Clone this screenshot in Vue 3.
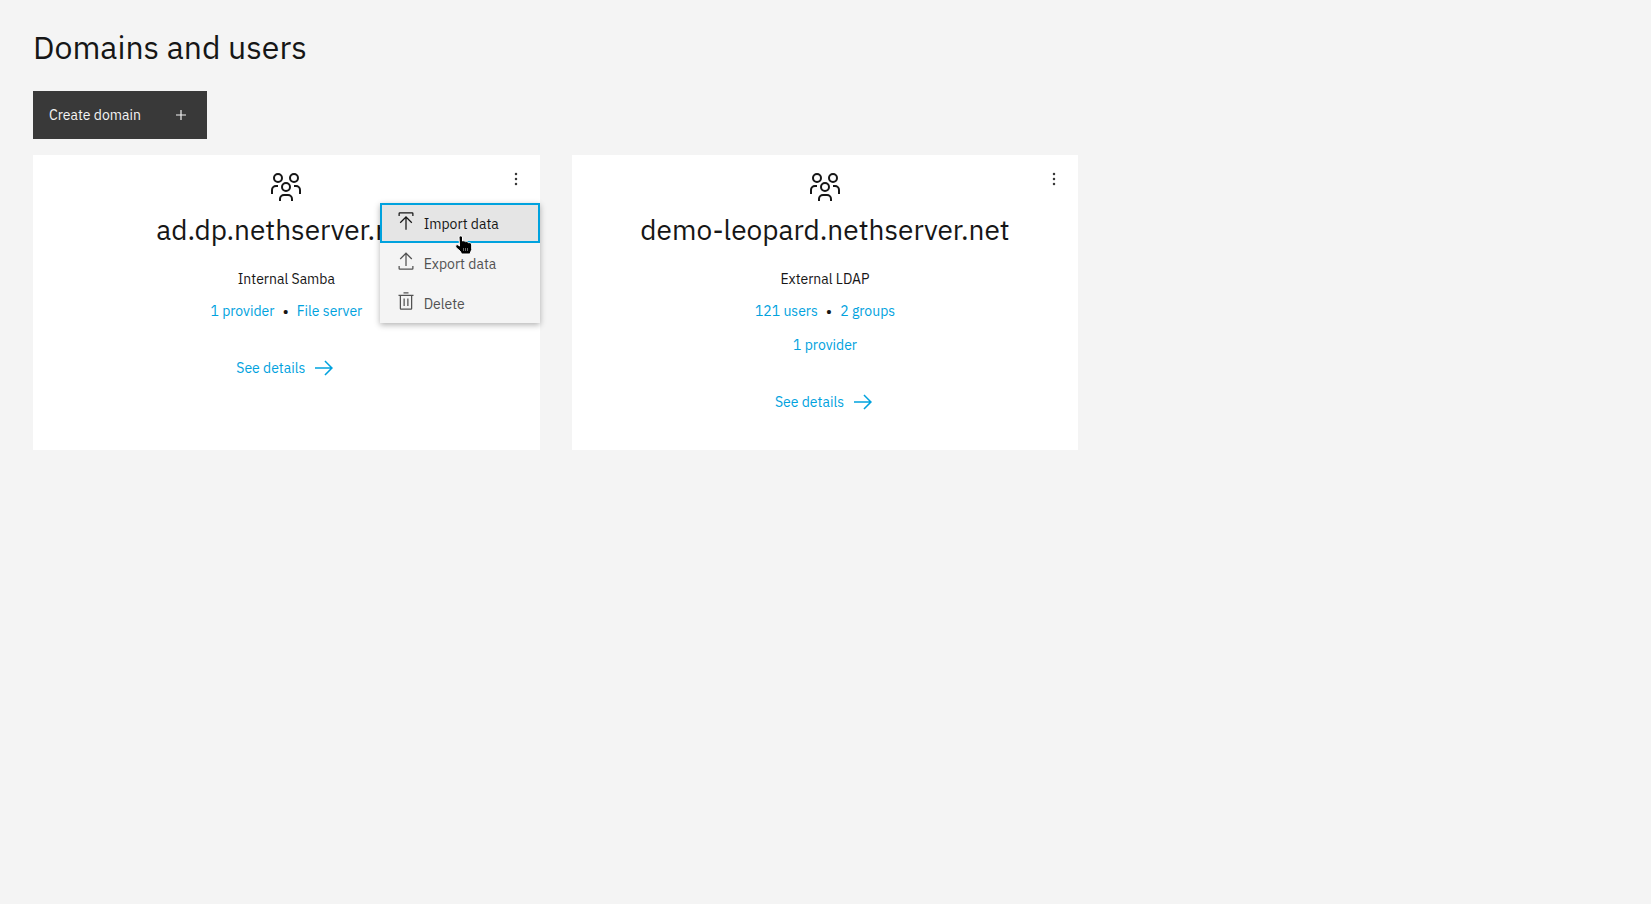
<script setup>
import { ref } from 'vue'

const domains = ref([
  {
    name: 'ad.dp.nethserver.net',
    type: 'Internal Samba',
    rows: [['1 provider', 'File server']],
    menuOpen: true
  },
  {
    name: 'demo-leopard.nethserver.net',
    type: 'External LDAP',
    rows: [['121 users', '2 groups'], ['1 provider']],
    menuOpen: false
  }
])

const menuItems = [
  { id: 'import', label: 'Import data' },
  { id: 'export', label: 'Export data' },
  { id: 'delete', label: 'Delete' }
]

const toggleMenu = (domain) => {
  domain.menuOpen = !domain.menuOpen
}
</script>

<template>
  <main class="page">
    <h1 class="page-title">Domains and users</h1>

    <button type="button" class="create-button">
      <span>Create domain</span>
      <svg width="16" height="16" viewBox="0 0 16 16" fill="currentColor" aria-hidden="true">
        <path d="M8.600 7.400V3H7.400v4.400H3v1.200h4.400V13h1.200V8.600H13V7.400z" />
      </svg>
    </button>

    <div class="cards">
      <section v-for="domain in domains" :key="domain.name" class="card">
        <svg class="card-icon" width="32" height="32" viewBox="0 0 32 32" fill="currentColor" aria-hidden="true">
          <path d="M26 14h-2v2h2a3 3 0 0 1 3 3v4h2v-4a5 5 0 0 0-5-5zM24 4a3 3 0 1 1-3 3 3 3 0 0 1 3-3m0-2a5 5 0 1 0 5 5 5 5 0 0 0-5-5zM23 30h-2v-2a3 3 0 0 0-3-3h-4a3 3 0 0 0-3 3v2H9v-2a5 5 0 0 1 5-5h4a5 5 0 0 1 5 5zM16 13a3 3 0 1 1-3 3 3 3 0 0 1 3-3m0-2a5 5 0 1 0 5 5 5 5 0 0 0-5-5zM8 14H6a5 5 0 0 0-5 5v4h2v-4a3 3 0 0 1 3-3h2zM8 4a3 3 0 1 1-3 3 3 3 0 0 1 3-3m0-2a5 5 0 1 0 5 5 5 5 0 0 0-5-5z" />
        </svg>
        <h2 class="card-title">{{ domain.name }}</h2>
        <p class="card-type">{{ domain.type }}</p>

        <div v-for="(row, index) in domain.rows" :key="index" class="card-row">
          <template v-for="(item, i) in row" :key="item">
            <span v-if="i > 0" class="bullet">•</span>
            <a href="#" class="link">{{ item }}</a>
          </template>
        </div>

        <a href="#" class="link details">
          <span>See details</span>
          <svg width="24" height="24" viewBox="0 0 32 32" fill="currentColor" aria-hidden="true">
            <path d="M18 6l-1.43 1.393L24.15 15H4v2h20.15l-7.58 7.573L18 26l10-10z" />
          </svg>
        </a>

        <button type="button" class="menu-toggle" aria-label="Options" @click="toggleMenu(domain)">
          <svg width="20" height="20" viewBox="0 0 32 32" fill="currentColor" aria-hidden="true">
            <circle cx="16" cy="8" r="2" />
            <circle cx="16" cy="16" r="2" />
            <circle cx="16" cy="24" r="2" />
          </svg>
        </button>

        <div v-if="domain.menuOpen" class="menu">
          <button
            v-for="item in menuItems"
            :key="item.id"
            type="button"
            class="menu-item"
            :class="{ active: item.id === 'import' }"
          >
            <svg class="menu-icon" width="20" height="20" viewBox="0 0 32 32" fill="currentColor" aria-hidden="true">
              <path v-if="item.id === 'import'" d="M6 18l1.41 1.41L15 11.83V30h2V11.83l7.59 7.58L26 18 16 8zM6 8V4h20v4h2V4a2 2 0 0 0-2-2H6a2 2 0 0 0-2 2v4z" />
              <path v-else-if="item.id === 'export'" d="M6 12l1.41 1.41L15 5.83V24h2V5.83l7.59 7.58L26 12 16 2zM6 24v4h20v-4h2v4a2 2 0 0 1-2 2H6a2 2 0 0 1-2-2v-4z" />
              <path v-else d="M12 12h2v12h-2zM18 12h2v12h-2zM4 6v2h2v20a2 2 0 0 0 2 2h16a2 2 0 0 0 2-2V8h2V6zm4 22V8h16v20zM12 2h8v2h-8z" />
            </svg>
            <span>{{ item.label }}</span>
          </button>

          <!-- hand pointer over the active item -->
          <svg class="pointer" width="18" height="20" viewBox="0 0 18 20" aria-hidden="true">
            <path d="M4 2C4 .5 7.500 .5 7.500 2V6C8.500 5.500 10 5.800 10.500 6.800 11.500 6.300 13 6.600 13.500 7.800 15 7.300 16.700 8 16.700 10V14.500L15 19H6.500L5.500 16.500 1 12.500C0 10.500 1.500 9 3 9.800L4.500 11z" fill="#000" stroke="#fff" stroke-width="1" />
            <path d="M8.500 13v3M10.500 13v3M12.500 13v3" stroke="#999" stroke-width=".7" />
          </svg>
        </div>
      </section>
    </div>
  </main>
</template>

<style>
body {
  margin: 0;
  background: #f4f4f4;
}
</style>

<style scoped>
.page {
  padding: 27px 34px 32px 33px;
  color: #161616;
  font-family: 'IBM Plex Sans', Roboto, 'Liberation Sans', sans-serif;
  font-size: 14px;
  line-height: 20px;
}

.page-title {
  margin: 0 0 24px;
  font-size: 32px;
  line-height: 40px;
  font-weight: 400;
}

button {
  border: 0;
  font: inherit;
  text-align: left;
  cursor: pointer;
}

.create-button {
  display: flex;
  align-items: center;
  gap: 32px;
  height: 48px;
  margin-bottom: 16px;
  padding: 0 18px 0 16px;
  background: #393939;
  color: #f4f4f4;
}

.cards {
  display: grid;
  grid-template-columns: repeat(3, 1fr);
  gap: 32px;
}

.card {
  position: relative;
  display: flex;
  flex-direction: column;
  align-items: center;
  padding: 16px 16px 36px;
  background: #fff;
}

.card-title {
  margin: 8px 0 20px;
  font-size: 28px;
  line-height: 38px;
  font-weight: 400;
}

.card-type {
  margin: 0 0 12px;
}

.card-row {
  display: flex;
  gap: 8px;
  margin-bottom: 14px;
}

.bullet {
  font-size: 16px;
}

.link {
  color: #00a2de;
  text-decoration: none;
}

.details {
  display: flex;
  align-items: center;
  gap: 7px;
  margin-top: 21px;
}

.menu-toggle {
  position: absolute;
  top: 0;
  right: 0;
  display: flex;
  align-items: center;
  justify-content: center;
  width: 48px;
  height: 48px;
  padding: 0;
  background: transparent;
  color: #393939;
}

.menu {
  position: absolute;
  top: 48px;
  right: 0;
  width: 160px;
  background: #f4f4f4;
  box-shadow: 0 2px 6px rgba(0, 0, 0, 0.3);
}

.menu-item {
  display: flex;
  align-items: center;
  gap: 8px;
  width: 100%;
  height: 40px;
  padding: 2px 16px 0;
  background: transparent;
  color: #525252;
}

.menu-item.active {
  background: #e5e5e5;
  color: #161616;
  outline: 2px solid #00a2de;
  outline-offset: -2px;
}

.menu-icon {
  margin-bottom: 6px;
}

.pointer {
  position: absolute;
  top: 32px;
  left: 75px;
}
</style>
